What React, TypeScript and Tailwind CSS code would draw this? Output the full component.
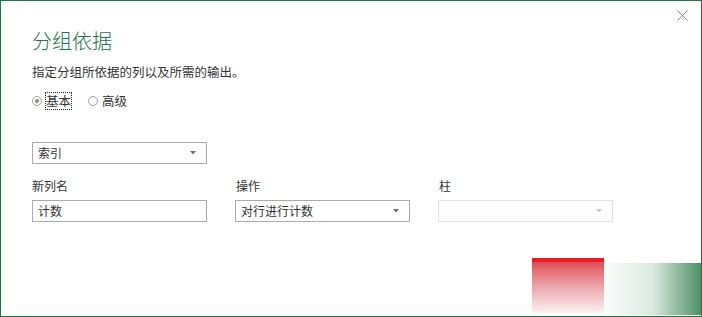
import { X } from "lucide-react";

const font = { fontFamily: '"Microsoft YaHei", "Noto Sans CJK SC", "Noto Sans", sans-serif' };

function Caret({ faded }: { faded?: boolean }) {
  return (
    <svg width="6" height="4" viewBox="0 0 6 4" className="shrink-0">
      <path d="M0 0 L6 0 L3 3.5 Z" fill={faded ? "#c8c8c8" : "#707070"} />
    </svg>
  );
}

function Select({ value, disabled }: { value?: string; disabled?: boolean }) {
  return (
    <div
      className={`flex h-[22px] w-[175px] items-center justify-between pl-[5px] pr-[10px] text-[12px] ${
        disabled ? "border border-[#e1e1e1] bg-[#fdfdfd]" : "border border-[#ababab] bg-white text-[#333]"
      }`}
    >
      <span>{value}</span>
      <Caret faded={disabled} />
    </div>
  );
}

function Radio({ label, checked, focused }: { label: string; checked?: boolean; focused?: boolean }) {
  return (
    <label className="flex items-center gap-[4px]">
      <span className="flex h-[10px] w-[10px] items-center justify-center rounded-full border border-[#a0a0a0] bg-white">
        {checked && <span className="h-[4px] w-[4px] rounded-full bg-[#8a8a8a]" />}
      </span>
      <span className={focused ? "outline outline-1 outline-dotted outline-[#222]" : ""}>{label}</span>
    </label>
  );
}

export default function App() {
  return (
    <div
      className="relative h-[317px] w-[702px] overflow-hidden border border-[#217346] bg-white text-[#333]"
      style={font}
    >
      <button className="absolute right-[9px] top-[5px] text-[#707070]">
        <X size={19} strokeWidth={1.1} />
      </button>

      <div className="pl-[31px] pt-[27px]">
        <h1 className="text-[20px] font-light leading-[26px] text-[#217346]">分组依据</h1>
        <p className="mt-[9px] text-[12.5px] leading-[18px]">指定分组所依据的列以及所需的输出。</p>

        <div className="mt-[12px] flex gap-[17px] text-[12.5px] leading-[16px]">
          <Radio label="基本" checked focused />
          <Radio label="高级" />
        </div>

        <div className="mt-[33px]">
          <Select value="索引" />
        </div>

        <div className="mt-[13px] flex gap-[28px] text-[12px]">
          <div className="flex flex-col gap-[5px]">
            <span className="leading-[18px]">新列名</span>
            <div className="flex h-[22px] w-[175px] items-center border border-[#ababab] pl-[5px]">计数</div>
          </div>
          <div className="flex flex-col gap-[5px]">
            <span className="pl-[1px] leading-[18px]">操作</span>
            <Select value="对行进行计数" />
          </div>
          <div className="flex flex-col gap-[5px]">
            <span className="pl-[1px] leading-[18px]">柱</span>
            <Select disabled />
          </div>
        </div>
      </div>

      <div className="absolute left-[531px] top-[257px] h-[55px] w-[72px] border-t-[4px] border-[#ec1c24] bg-gradient-to-b from-[#e04a55] via-[#eaa8af] to-[#fcf2f3]" />
      <div className="absolute left-[604px] top-[262px] h-[52px] w-[96px] bg-gradient-to-r from-[#fafcfb] via-[#dbe9e0] to-[#4a9068]" />
    </div>
  );
}
